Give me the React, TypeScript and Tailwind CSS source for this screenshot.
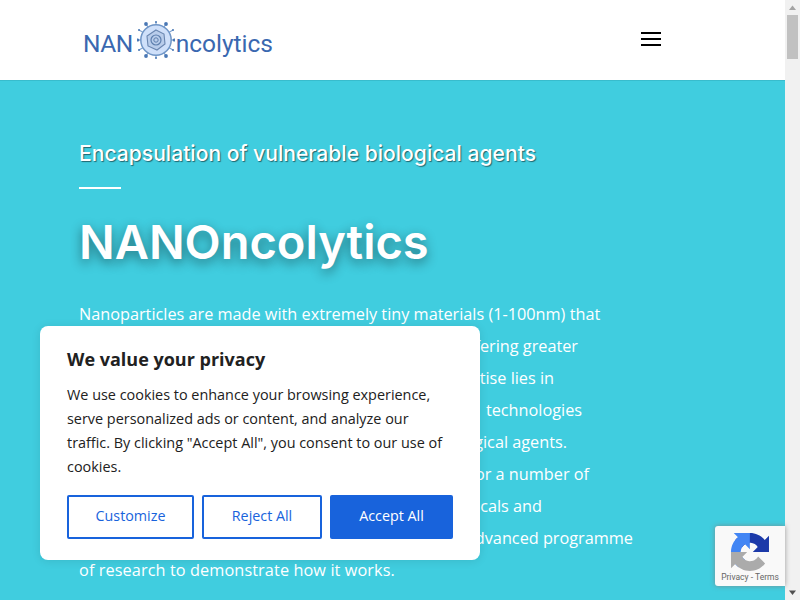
export default function App() {
  const lines = [
    { t: "have unique properties compared to larger forms, offering greater", w: "w-[499px]" },
    { t: "protection to their fragile cargo. Our expertise lies in", w: "w-[475px]" },
    { t: "the design of encapsulation and delivery\u00a0\u00a0technologies", w: "w-[503px]" },
    { t: "for protecting vulnerable biological agents.", w: "w-[488px]" },
    { t: "This approach shows great promise for a number of", w: "w-[510px]" },
    { t: "applications in human pharmaceuticals and", w: "w-[463px]" },
    { t: "biotechnology, and we are leading an advanced programme", w: "w-[554px]" },
  ];
  const spokes = [
    [19, 3, 1],
    [9, 5, 1.9],
    [29, 5, 1.9],
    [2, 11, 1],
    [36, 11, 1],
    [0.8, 21, 1.6],
    [37.2, 21, 1.6],
    [2, 31, 1],
    [36, 31, 1],
    [9, 37, 1.9],
    [29, 37, 1.9],
    [19, 39, 1],
  ];
  return (
    <div className="relative flex h-[600px] w-[800px] overflow-hidden bg-white">
      <main className="flex w-[785px] shrink-0 flex-col">
        <header className="flex h-20 shrink-0 items-center justify-between bg-white pl-[83px] pr-[124px]">
          <div className="flex items-center text-[#3a68b0] [font-family:Roboto,sans-serif] text-[24.5px] leading-none">
            <span className="mt-[9px] tracking-[-0.5px]">NAN</span>
            <svg width="38" height="42" viewBox="0 0 38 42" className="ml-[4px] mr-[1px] mt-[-1px] shrink-0">
              {spokes.map(([x, y, r]) => (
                <g key={`${x}-${y}`}>
                  <line x1="19" y1="21" x2={x} y2={y} stroke="#7fa3d0" strokeWidth="1.1" />
                  <circle cx={x} cy={y} r={r} fill="#4a78b5" />
                </g>
              ))}
              <circle cx="19" cy="21" r="15.2" fill="#cfe0fa" stroke="#6f95c6" strokeWidth="1.5" />
              <polygon points="19,11 27,15 28,25 20,31 11,27 10,17" fill="#b9cdeb" stroke="#6a86b0" strokeWidth="1.1" />
              <circle cx="19" cy="21" r="5" fill="none" stroke="#5d7fae" strokeWidth="1.2" />
              <circle cx="19" cy="21" r="2.2" fill="none" stroke="#5d7fae" strokeWidth="1" />
            </svg>
            <span className="mt-[9px]">ncolytics</span>
          </div>
          <button className="mt-[-2px] flex w-5 flex-col gap-1">
            <span className="h-0.5 w-5 bg-black" />
            <span className="h-0.5 w-5 bg-black" />
            <span className="h-0.5 w-5 bg-black" />
          </button>
        </header>
        <section className="flex-1 border-t border-[#38bccd] bg-[#40cddf] pl-[79px] pt-[58px] text-white">
          <h2 className="whitespace-nowrap text-[21.1px] leading-[30px] font-medium [font-family:Inter,sans-serif] [text-shadow:1px_1px_1px_rgba(0,0,0,0.5)]">
            Encapsulation of vulnerable biological agents
          </h2>
          <div className="mt-[18px] h-0.5 w-[42px] bg-white" />
          <h1 className="mt-[22px] whitespace-nowrap text-[47px] leading-[62px] font-semibold [font-family:Inter,sans-serif] [text-shadow:0_4px_12px_rgba(0,0,0,0.45)]">
            NANOncolytics
          </h1>
          <div className="mt-[25px] text-[16.25px] leading-[32px] font-medium [font-family:'Open_Sans',sans-serif]">
            <p className="whitespace-nowrap">Nanoparticles are made with extremely tiny materials (1-100nm) that</p>
            {lines.map((l) => (
              <p key={l.t} className={`flex justify-end whitespace-nowrap ${l.w}`}>
                {l.t}
              </p>
            ))}
            <p className="whitespace-nowrap tracking-[0.1px]">of research to demonstrate how it works.</p>
          </div>
        </section>
      </main>

      <div className="flex w-[15px] shrink-0 flex-col items-center bg-[#f1f1f1]">
        <svg width="15" height="15" viewBox="0 0 15 15" className="shrink-0">
          <polygon points="7.5,5.5 11,10 4,10" fill="#a3a3a3" />
        </svg>
        <div className="h-11 w-[11px] bg-[#c1c1c1]" />
        <svg width="15" height="15" viewBox="0 0 15 15" className="mt-auto shrink-0">
          <polygon points="7.5,10 11,5.5 4,5.5" fill="#505050" />
        </svg>
      </div>

      <div className="absolute left-10 top-[326px] h-[234px] w-[440px] rounded-lg bg-white px-[27px] pt-[21px] text-[#212121] [font-family:'Open_Sans',sans-serif] shadow-[0_1px_10px_rgba(0,0,0,0.1)]">
        <h3 className="text-[18px] leading-[24px] font-bold">We value your privacy</h3>
        <p className="mt-[12px] whitespace-nowrap text-[14.42px] leading-[24px]">
          We use cookies to enhance your browsing experience,
          <br />
          serve personalized ads or content, and analyze our
          <br />
          traffic. By clicking "Accept All", you consent to our use of
          <br />
          cookies.
        </p>
        <div className="mt-[16px] flex gap-2 text-[14.3px]">
          <button className="h-11 w-[127px] rounded-[2px] border-2 border-[#1863dc] pb-[2px] text-[#1863dc]">Customize</button>
          <button className="h-11 w-[120px] rounded-[2px] border-2 border-[#1863dc] pb-[2px] text-[#1863dc]">Reject All</button>
          <button className="h-11 w-[123px] rounded-[2px] bg-[#1863dc] pb-[2px] text-white">Accept All</button>
        </div>
      </div>

      <div className="absolute left-[715px] top-[526px] flex h-[60px] w-[70px] flex-col items-center rounded-l-[3px] bg-[#f9f9f9] pt-[7px] shadow-[0_0_5px_rgba(128,128,128,0.8)]">
        <svg width="38" height="38" viewBox="0 0 64 64" className="shrink-0">
          <path d="M64 31.955l-.033-1.37V4.687l-7.16 7.16C50.948 4.674 42.033.093 32.05.093c-10.4 0-19.622 4.96-25.458 12.64l11.736 11.86a15.55 15.55 0 0 1 4.754-5.334c2.05-1.6 4.952-2.906 8.968-2.906.485 0 .86.057 1.135.163 4.976.393 9.29 3.14 11.83 7.124l-8.307 8.307c10.523-.04 22.4-.066 27.295 0" fill="#1c3aa9" />
          <path d="M31.862.094l-1.37.033H4.594l7.16 7.16C4.58 13.147 0 22.06 0 32.043c0 10.4 4.96 19.622 12.64 25.458l11.86-11.736a15.55 15.55 0 0 1-5.334-4.754c-1.6-2.05-2.906-4.952-2.906-8.968 0-.485.057-.86.163-1.135.393-4.976 3.14-9.29 7.124-11.83l8.307 8.307c-.04-10.523-.066-22.4 0-27.295" fill="#4285f4" />
          <path d="M.001 32.045l.033 1.37v25.898l7.16-7.16c5.86 7.173 14.774 11.754 24.757 11.754 10.4 0 19.622-4.96 25.458-12.64l-11.736-11.86a15.55 15.55 0 0 1-4.754 5.334c-2.05 1.6-4.952 2.906-8.968 2.906-.485 0-.86-.057-1.135-.163-4.976-.393-9.29-3.14-11.83-7.124l8.307-8.307c-10.523.04-22.4.066-27.295 0" fill="#ababab" />
        </svg>
        <div className="text-[8.5px] leading-[12px] whitespace-nowrap text-[#666] [font-family:Roboto,sans-serif]">Privacy - Terms</div>
      </div>
    </div>
  );
}
